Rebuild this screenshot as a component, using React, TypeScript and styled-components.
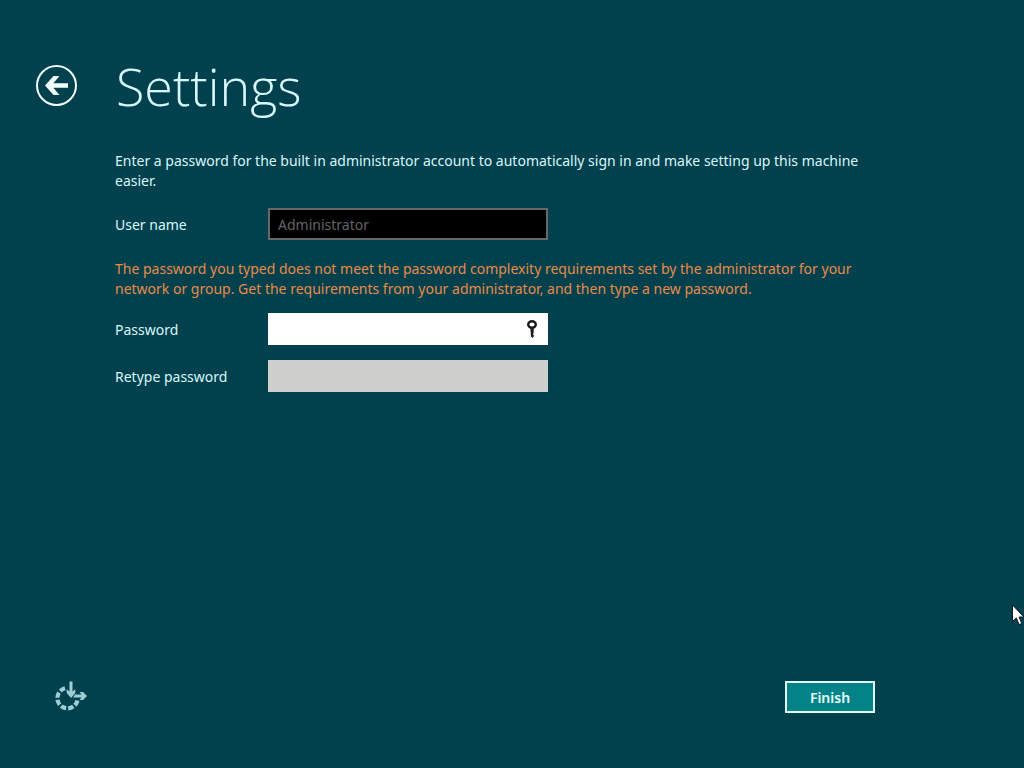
import React, { useState } from "react";
import styled, { createGlobalStyle } from "styled-components";

const GlobalStyle = createGlobalStyle`
  *, *::before, *::after { box-sizing: border-box; }
  body {
    margin: 0;
    background: #00414d;
    color: #d9f6fb;
    font-family: "Noto Sans", "Open Sans", sans-serif;
    font-size: 14px;
    line-height: 20px;
  }
`;

const Page = styled.div`
  position: relative;
  display: flex;
  flex-direction: column;
  min-height: 100vh;
  padding: 47px 149px 55px 36px;
  overflow: hidden;
`;

const Header = styled.header`
  display: flex;
  align-items: center;
  gap: 38px;
  height: 76px;
`;

const BackButton = styled.button`
  width: 42px;
  height: 42px;
  padding: 0;
  border: 0;
  border-radius: 50%;
  background: none;
  color: #f4ffff;

  svg { display: block; }
`;

const Title = styled.h1`
  margin: 0;
  padding-top: 2px;
  color: #d9f8ff;
  font-family: "Open Sans", "Noto Sans", sans-serif;
  font-size: 52px;
  font-weight: 300;
  line-height: 76px;
`;

const Form = styled.form`
  display: flex;
  flex: 1;
  flex-direction: column;
`;

const Fields = styled.div`
  flex: 1;
  padding: 28px 0 28px 79px;
`;

const Message = styled.p<{ $error?: boolean }>`
  max-width: 760px;
  margin: 0;
  color: ${(p) => (p.$error ? "#e98b4a" : "inherit")};
`;

const Row = styled.div<{ $above: number; $below: number }>`
  display: flex;
  align-items: center;
  margin: ${(p) => p.$above}px 0 ${(p) => p.$below}px;
`;

const Label = styled.label`
  width: 153px;
  flex: none;
  padding-top: 2px;
`;

const Box = styled.div<{ $tone: "disabled" | "active" | "idle" }>`
  display: flex;
  align-items: center;
  width: 280px;
  height: 32px;
  padding: 0 8px;
  border: 2px solid;
  ${(p) =>
    p.$tone === "disabled"
      ? "background: #000000; border-color: #686868;"
      : p.$tone === "active"
        ? "background: #ffffff; border-color: #ffffff;"
        : "background: #cfcfcc; border-color: #cfcfcc;"}
`;

const Input = styled.input`
  flex: 1;
  min-width: 0;
  height: 28px;
  padding: 0;
  border: 0;
  outline: 0;
  background: transparent;
  color: #1a1a1a;
  font: inherit;

  &:disabled { color: #646464; }
`;

const Footer = styled.footer`
  display: flex;
  align-items: center;
  justify-content: space-between;
  padding-left: 16px;
`;

const EaseButton = styled.button`
  height: 32px;
  padding: 0;
  border: 0;
  background: none;
  color: #9fcdd6;

  svg { display: block; }
`;

const FinishButton = styled.button`
  width: 90px;
  height: 32px;
  padding: 2px 0 0;
  border: 2px solid #e2ffff;
  background: #038387;
  color: #e8ffff;
  font: inherit;
  font-weight: 600;
`;

const Pointer = styled.svg`
  position: absolute;
  top: 604px;
  right: 0;
`;

const BackIcon = () => (
  <svg width="42" height="42" viewBox="0 0 42 42" aria-hidden="true">
    <circle cx="20.5" cy="21.5" r="19.5" fill="none" stroke="currentColor" strokeWidth="2" />
    <path d="M9 21.500 17.500 12h6l-6.200 7.200H32v4.600H17.300l6.200 7.200h-6z" fill="currentColor" />
  </svg>
);

const KeyIcon = () => (
  <svg width="12" height="20" viewBox="0 0 12 20" aria-hidden="true">
    <ellipse cx="6" cy="5.500" rx="3.800" ry="3.200" fill="none" stroke="#1c1c1c" strokeWidth="2.400" />
    <path d="M4.300 8.500h3.400v5.500l-.9 1 .9 1v1.600L6.500 19 5 17.500z" fill="#1c1c1c" />
  </svg>
);

const EaseIcon = () => (
  <svg width="36" height="32" viewBox="0 0 36 32" aria-hidden="true">
    <path
      d="M13 7.300A10.200 10.200 0 1 0 25.500 19.500"
      fill="none" stroke="currentColor" strokeWidth="4.200"
      pathLength="63" strokeDasharray="8 3"
    />
    <path d="M17.500 0.500h3v10l2.800-2.300v3.800L19 17l-4.300-5V8.200l2.800 2.300z" fill="currentColor" />
    <path d="M23 13.500h6.500l-2-2.500h3.500l4 4-4 4h-3.500l2-2.500H21z" fill="currentColor" />
  </svg>
);

export default function App() {
  const [password, setPassword] = useState("");
  const [retyped, setRetyped] = useState("");

  return (
    <>
      <GlobalStyle />
      <Page>
        <Header>
          <BackButton type="button" aria-label="Back">
            <BackIcon />
          </BackButton>
          <Title>Settings</Title>
        </Header>
        <Form onSubmit={(e) => e.preventDefault()}>
          <Fields>
            <Message>
              Enter a password for the built in administrator account to automatically sign in and
              make setting up this machine easier.
            </Message>
            <Row $above={17} $below={19}>
              <Label htmlFor="user">User name</Label>
              <Box $tone="disabled">
                <Input id="user" value="Administrator" disabled />
              </Box>
            </Row>
            <Message $error role="alert">
              The password you typed does not meet the password complexity requirements set by the
              administrator for your network or group. Get the requirements from your
              administrator, and then type a new password.
            </Message>
            <Row $above={14} $below={15}>
              <Label htmlFor="password">Password</Label>
              <Box $tone="active">
                <Input
                  id="password"
                  type="password"
                  value={password}
                  onChange={(e) => setPassword(e.target.value)}
                />
                <KeyIcon />
              </Box>
            </Row>
            <Row $above={15} $below={15}>
              <Label htmlFor="retype">Retype password</Label>
              <Box $tone="idle">
                <Input
                  id="retype"
                  type="password"
                  value={retyped}
                  onChange={(e) => setRetyped(e.target.value)}
                />
              </Box>
            </Row>
          </Fields>
          <Footer>
            <EaseButton type="button" aria-label="Ease of access">
              <EaseIcon />
            </EaseButton>
            <FinishButton type="submit">Finish</FinishButton>
          </Footer>
        </Form>
        <Pointer width="12" height="22" viewBox="0 0 12 22" aria-hidden="true">
          <path
            d="M.5 1v16.500l3.800-3.600 2.800 6.700 2.700-1.100-2.800-6.500H12z"
            fill="#fff" stroke="#101820" strokeWidth="1"
          />
        </Pointer>
      </Page>
    </>
  );
}
